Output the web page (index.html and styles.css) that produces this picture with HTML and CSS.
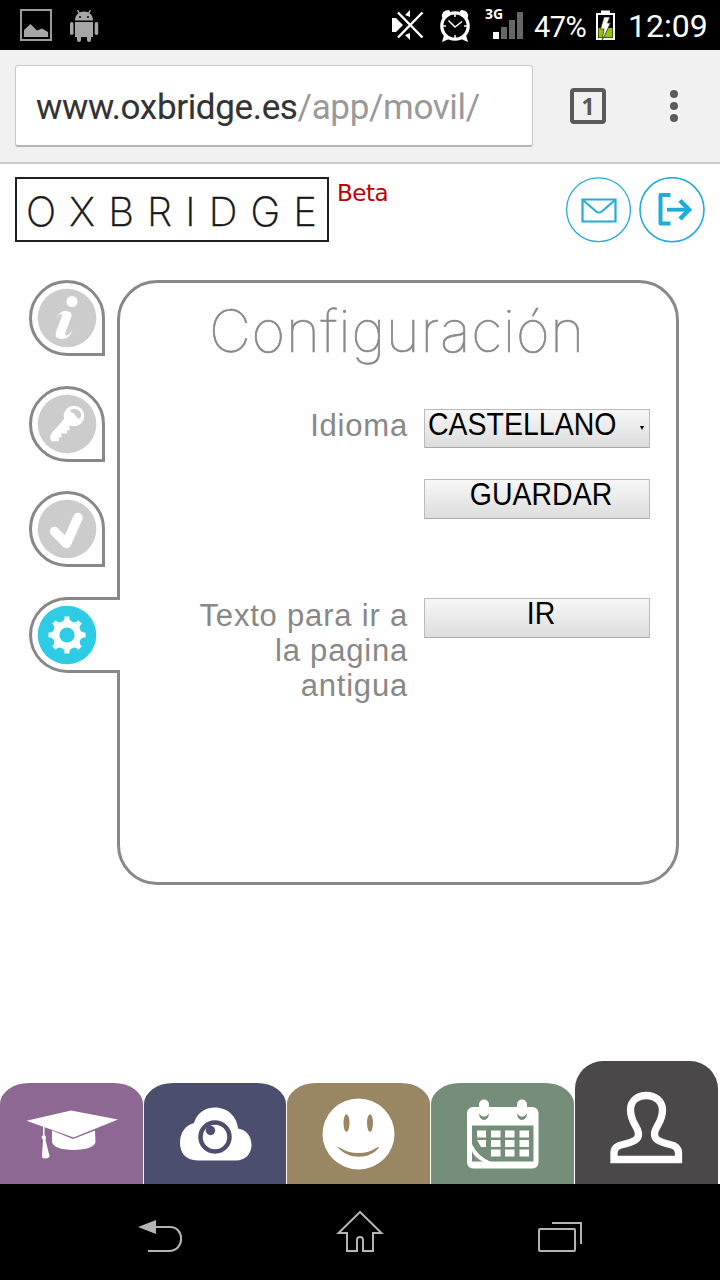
FILE: index.html
```html
<!DOCTYPE html>
<html lang="es">
<head>
<meta charset="utf-8">
<title>Oxbridge - Configuración</title>
<link rel="stylesheet" href="styles.css">
</head>
<body>
<div class="screen">
  <div class="status">
    <svg class="status-left" width="110" height="50" viewBox="0 0 110 50">
      <rect x="21" y="10" width="30" height="30" fill="none" stroke="#9b9b9b" stroke-width="2"/>
      <path d="M24 37V30L30.500 24L37 30.500L42 28.500L48 32V37Z" fill="#a6a6a6"/>
      <g fill="#a6a6a6">
        <path d="M75 20.500C75 8.500 93 8.500 93 20.500Z"/>
        <path d="M77.500 10L79.500 13.500M90.500 10L88.500 13.500" stroke="#a6a6a6" stroke-width="1.500"/>
        <path d="M75 22H93V37H75ZM77 36H81V40A2 2 0 0 1 77 40ZM87 36H91V40A2 2 0 0 1 87 40Z"/>
        <rect x="70" y="22" width="3.500" height="13" rx="1.750"/><rect x="94.700" y="22" width="3.500" height="13" rx="1.750"/>
      </g>
      <circle cx="80" cy="17" r="1" fill="#000"/><circle cx="88" cy="17" r="1" fill="#000"/>
    </svg>
    <div class="status-right">
      <svg width="34" height="50" viewBox="390 0 34 50">
        <path d="M392 18H396L403 25L396 32H392ZM405 15L410 10V17ZM405 35L410 40V33Z" fill="#fff"/>
        <path d="M398 12.500L422.500 37.500M422.500 12.500L398 37.500" stroke="#000" stroke-width="5"/>
        <path d="M398 12.500L422.500 37.500M422.500 12.500L398 37.500" stroke="#fff" stroke-width="2.500"/>
      </svg>
      <svg width="34" height="50" viewBox="438 0 34 50">
        <g fill="none" stroke="#fff"><circle cx="455" cy="26" r="13.200" stroke-width="3.200"/><path d="M448.500 20.500L455 27L462 21.500" stroke-width="1.500"/><path d="M455 14V17M455 35V38M443 26H446M464 26H467" stroke-width="1.500"/></g>
        <path d="M442 18Q441 10 449 10L451 13ZM468 18Q469 10 461 10L459 13ZM442 42L444 35L449 39ZM468 42L466 35L461 39Z" fill="#fff"/>
      </svg>
      <div class="signal">
        <span class="network">3G</span>
        <svg width="32" height="28" viewBox="0 0 32 28"><path d="M1 20H7V27H1Z" fill="#fff"/><path d="M9 15H15V27H9ZM17 8H23V27H17ZM25 0H31V27H25Z" fill="#666"/></svg>
      </div>
      <span class="percent">47%</span>
      <svg width="22" height="50" viewBox="595 0 22 50">
        <path d="M601 13V10.500H610V13" fill="#fff"/><path d="M597 14H614V39H597Z" fill="none" stroke="#fff" stroke-width="2"/>
        <path d="M598.500 28H612.500V37.500H598.500Z" fill="#91c300"/>
        <path d="M604 17H610L607.500 23H610.500L602 41L604 29H600.500Z" fill="#fff" stroke="#222" stroke-width=".7"/>
      </svg>
      <span class="clock">12:09</span>
    </div>
  </div>

  <div class="browser">
    <div class="url"><span class="host">www.oxbridge.es</span><span class="path">/app/movil/</span></div>
    <div class="tab-count">1</div>
    <div class="menu-dots"><i></i><i></i><i></i></div>
  </div>

  <main class="page">
    <header class="header">
      <div class="logo"><span>O</span><span>X</span><span>B</span><span>R</span><span>I</span><span>D</span><span>G</span><span>E</span></div>
      <span class="beta">Beta</span>
      <div class="actions">
        <svg width="66" height="66" viewBox="0 0 66 66" fill="none" stroke="#22acd8">
          <circle cx="33.500" cy="32.700" r="31.900" stroke-width="1.300"/>
          <path d="M17.500 22.500H50.500V44.500H17.500Z" stroke-width="2.200"/>
          <path d="M18.500 23.500L31.500 34.700Q34 36.500 36.500 34.700L49.500 23.500" stroke-width="2"/>
        </svg>
        <svg width="66" height="66" viewBox="0 0 66 66" fill="none" stroke="#1fabdc">
          <circle cx="33" cy="32.700" r="32" stroke-width="1.600"/>
          <path d="M31.500 18H21.500V46.500H31.500" stroke-width="4" stroke-linejoin="round"/>
          <path d="M28 32.700H49" stroke-width="3.800"/><path d="M41 23.500L50 32.700L41 42" stroke-width="4.500"/>
        </svg>
      </div>
    </header>

    <section class="workspace">
      <nav class="side">
        <a class="side-tab">
          <svg width="60" height="60" viewBox="0 0 60 60"><circle cx="30" cy="30" r="29.300" fill="#ccc"/>
            <circle cx="35" cy="13.500" r="5.600" fill="#fff"/>
            <path d="M18.500 32Q22 22.500 29 23Q36.500 23.500 34 30L28.500 44Q27.500 48 30 47.500Q33 46.500 35.500 41.500Q33.500 50.500 25.500 51Q17 51.500 19 44L24.500 29Q25.500 25.500 23.500 26Q21 27 18.500 32Z" fill="#fff"/></svg>
        </a>
        <a class="side-tab">
          <svg width="60" height="60" viewBox="0 0 60 60"><circle cx="30" cy="30" r="29.300" fill="#ccc"/>
            <circle cx="37" cy="22" r="10.300" fill="#fff"/>
            <path d="M27 25L14 40Q12 45 15 47.500L22 47V43.500L25 43L24 39.500H30V36L33 36.500L32 31.500L37 31Z" fill="#fff"/>
            <path d="M32.500 17Q38 12.500 43 17.500Q46 22 42 25Q39 23 37 19.500Q35 18 32.500 17Z" fill="#ccc"/></svg>
        </a>
        <a class="side-tab">
          <svg width="60" height="60" viewBox="0 0 60 60"><circle cx="30" cy="30" r="29.300" fill="#ccc"/>
            <path d="M17.500 32.500L29.500 44.500L41 18.500" fill="none" stroke="#fff" stroke-width="9.500" stroke-linecap="round" stroke-linejoin="round"/></svg>
        </a>
        <a class="side-tab side-tab-active">
          <svg width="60" height="60" viewBox="0 0 60 60"><circle cx="30" cy="30" r="29.300" fill="#2dcce4"/>
            <g fill="#fff"><circle cx="30" cy="30" r="14.300"/>
            <g id="tooth"><path d="M25.500 17L27.500 14V11.500H32.500V14L34.500 17ZM25.500 43L27.500 46V48.500H32.500V46L34.500 43Z"/></g>
            <use href="#tooth" transform="rotate(45 30 30)"/><use href="#tooth" transform="rotate(90 30 30)"/><use href="#tooth" transform="rotate(135 30 30)"/></g>
            <circle cx="30" cy="30" r="7.600" fill="#2dcce4"/></svg>
        </a>
      </nav>

      <div class="panel">
        <h1 class="title">Configuración</h1>
        <div class="form">
          <span class="label label-language">Idioma</span>
          <div class="control select"><span class="caption">CASTELLANO</span><i class="arrow"></i></div>
          <div class="control save"><span class="caption">GUARDAR</span></div>
          <span class="label label-old">Texto para ir a la pagina antigua</span>
          <div class="control go"><span class="caption">IR</span></div>
        </div>
      </div>
    </section>

    <nav class="bottom">
      <a class="section section-courses">
        <svg width="143" height="101" viewBox="0 0 143 101" fill="#fff">
          <path d="M26.500 37.700L71 27.500L118 36.500L73.500 54.500Z"/>
          <path d="M52 47.500L73 56L95 47.500L95.500 59Q94 66.500 73 67Q54 66.500 52 59Z"/>
          <path d="M43 44H44.500V52L46 54L45.500 57L49.500 73Q49 75.500 45 75.500Q42 75.500 42 73L43 57L41.500 54L43 52Z"/>
        </svg>
      </a>
      <a class="section section-view">
        <svg width="143" height="101" viewBox="0 0 143 101">
          <path d="M54 77.500C41 77.500 36 69 36 60C36 49 42 42 50 40C53 30 61 24.500 71 24.500C84 24.500 93 34 94 45.500C102 46.500 107.500 53 107.500 62C107.500 71 101 77.500 92 77.500Z" fill="#fff"/>
          <circle cx="71" cy="54" r="14.500" fill="#fff" stroke="#4b4e6d" stroke-width="4.500"/><circle cx="66.500" cy="47.500" r="4.700" fill="#4b4e6d"/>
        </svg>
      </a>
      <a class="section section-mood">
        <svg width="143" height="101" viewBox="0 0 143 101">
          <ellipse cx="71.500" cy="51" rx="36" ry="35.500" fill="#fff"/>
          <g fill="#998663"><ellipse cx="59.500" cy="40" rx="3" ry="8.700"/><ellipse cx="83" cy="40" rx="3" ry="8.700"/><path d="M50.500 64Q52 63.500 54.500 65.500C63 71.500 80 71.500 88 65.500Q91 63.500 92.500 64C83 77 61 77 50.500 64Z"/></g>
        </svg>
      </a>
      <a class="section section-calendar">
        <svg width="143" height="101" viewBox="0 0 143 101">
          <rect x="36" y="24" width="71.500" height="61.500" rx="6" fill="#fff"/>
          <rect x="48" y="16.500" width="10" height="18" rx="5" fill="#fff"/><rect x="86" y="16.500" width="10" height="18" rx="5" fill="#fff"/>
          <path d="M48 30.500Q53 37 58 30.500Q57.500 37 53 37Q48.500 37 48 30.500ZM86 30.500Q91 37 96 30.500Q95.500 37 91 37Q86.500 37 86 30.500Z" fill="#758e79"/>
          <rect x="41" y="42.500" width="61.500" height="36" fill="#758e79"/>
          <path d="M46 47.500H55V54.500H46ZM60 47.500H69.500V54.500H60ZM74 47.500H83.500V54.500H74ZM88.500 47.500H98V54.500H88.500ZM46 57H55V64H50ZM60 57H69.500V64H60ZM74 57H83.500V64H74ZM88.500 57H98V64H88.500ZM60 66.500H69.500V73.500H60ZM74 66.500H83.500V73.500H74ZM88.500 66.500H98V73.500H88.500Z" fill="#fff"/>
          <path d="M41 61Q46 73 61 79.500H54Q43 75 41 68Z" fill="#fff"/>
        </svg>
      </a>
      <a class="section section-profile">
        <svg width="143" height="124" viewBox="0 0 143 124" fill="none" stroke="#fff" stroke-width="7.300">
          <path d="M39 98.500H103.500V92C103.500 87 100 84.500 95 83.500C84 80.500 79 79 79.500 72C81 64 87.500 61 87.500 49C87.500 40 80 34.500 71.500 34.500C62 34.500 55.500 40 55.500 49C55.500 61 62 64 63.500 72C64 79 59 80.500 48 83.500C42 84.500 39 87 39 92Z"/>
        </svg>
      </a>
    </nav>
  </main>

  <div class="system-nav">
    <svg width="720" height="96" viewBox="0 1184 720 96" fill="none" stroke="#b4b4b4" stroke-width="2">
      <path d="M148 1251H169C185 1251 185 1227 170 1227H155"/>
      <path d="M138 1227L156 1220V1234Z" fill="#b4b4b4" stroke="none"/>
      <path d="M360 1212L338.500 1233H347V1251H357V1240Q357 1237 360 1237Q363 1237 363 1240V1251H373V1233H381.500Z"/>
      <rect x="539" y="1229" width="36" height="22" rx="1"/><path d="M552 1223H581V1244"/>
    </svg>
  </div>
</div>
</body>
</html>
```
FILE: styles.css
```css
* { box-sizing: border-box; }
body { margin: 0; background: #fefefe; font-family: "Liberation Sans", Arial, sans-serif; }
svg { display: block; flex: none; }
.screen { width: 720px; height: 1280px; display: flex; flex-direction: column; overflow: hidden; }

.status { height: 50px; background: #000; display: flex; justify-content: space-between; color: #fff; font-family: Roboto, sans-serif; }
.status-right { display: flex; height: 50px; padding-right: 12px; }
.status-right > svg:nth-child(2) { margin-left: 14px; }
.signal { width: 40px; margin: 7px 0 0 12px; height: 34px; display: grid; }
.signal > * { grid-area: 1 / 1; }
.signal svg { margin: 5px 0 0 8px; }
.network { font: bold 14px/14px "Open Sans", sans-serif; margin-left: 1px; }
.percent { font-size: 29px; line-height: 54px; width: 53px; margin-left: 10px; letter-spacing: -0.6px; white-space: nowrap; }
.status-right > svg:nth-of-type(3) { margin-left: 8px; }
.clock { font-size: 32px; line-height: 52px; margin-left: 11px; width: 80px; letter-spacing: 0; white-space: nowrap; }

.browser { height: 114px; background: #f1f1f1; display: flex; align-items: flex-start; padding: 15px 0 0 15px; border-bottom: 2px solid #cbcbcb; }
.url { width: 518px; height: 82px; background: #fff; border: 1px solid #c9c9c9; border-bottom: 2px solid #b5b5b5; border-radius: 3px; padding-left: 20px; font: 35px/84px Roboto, sans-serif; letter-spacing: -0.35px; white-space: nowrap; color: #333; }
.host { -webkit-text-stroke: 0.1px #333; }
.path { color: #999; }
.tab-count { width: 36px; height: 36px; margin: 23px 0 0 37px; border: 4px solid #5a5a5a; border-radius: 4px; font: bold 23px/29px "Open Sans", sans-serif; color: #5a5a5a; text-align: center; }
.menu-dots { display: flex; flex-direction: column; gap: 4px; margin: 25px 0 0 64px; }
.menu-dots i { width: 8px; height: 8px; border-radius: 50%; background: #5a5a5a; }

.page { flex: 1; display: flex; flex-direction: column; }
.header { display: flex; padding: 13px 15px 0; height: 116px; align-items: flex-start; }
.logo { width: 314px; height: 65px; border: 2px solid #202024; display: flex; justify-content: space-between; padding: 0 10px 0 9px; font: 200 40px/65px Inter, "Liberation Sans", sans-serif; color: #17171a; -webkit-text-stroke: 0.45px #17171a; }
.beta { font: 23px/33px "DejaVu Sans", sans-serif; color: #c00000; margin-left: 8px; letter-spacing: -0.5px; }
.actions { display: flex; gap: 8px; margin-left: auto; }

.workspace { display: flex; padding-left: 29px; height: 605px; }
.side { width: 88px; display: flex; flex-direction: column; gap: 29.7px; }
.side-tab { width: 76px; height: 76px; border: 3px solid #888; border-radius: 50% 50% 0 50%; padding: 5px; background: #fefefe; }
.side-tab-active { width: 91px; border-right: 0; border-radius: 38px 0 0 38px; z-index: 1; position: relative; }
.panel { width: 562px; height: 605px; border: 3px solid #888; border-radius: 40px; }
.title { margin: 10px 0 0; padding-left: 89px; height: 78px; font: 100 58px/76px Inter, "Liberation Sans", sans-serif; color: #888; letter-spacing: 0.7px; -webkit-text-stroke: 0.7px #888; white-space: nowrap; }

.form { display: grid; grid-template-columns: 288px 226px; grid-template-rows: 39px 40px 110px; gap: 31px 16px; padding-top: 38px; }
.label { text-align: right; font-size: 31px; line-height: 35px; letter-spacing: 0.8px; color: #888; }
.label-language { margin-top: -1px; }
.label-old { padding-left: 70px; margin-top: 48px; height: 106px; }
.control { height: 40px; border: 1px solid #bbb; border-bottom-color: #aaa; border-radius: 1px; background: linear-gradient(#f7f7f7, #ddd); color: #000; font-size: 32px; line-height: 28px; text-align: center; white-space: nowrap; }
.caption { display: inline-block; transform: scaleX(0.89); }
.select { height: 39px; display: flex; justify-content: space-between; padding: 0 5px 0 3px; }
.select .caption { transform-origin: left; }
.arrow { width: 0; height: 0; border: 2.5px solid transparent; border-top: 4px solid #000; border-bottom: 0; margin-top: 16px; }
.save { grid-column: 2; padding-left: 8px; }
.go { padding-left: 8px; margin-top: 48px; }

.bottom { margin-top: auto; display: flex; gap: 1.15px; align-items: flex-end; height: 124px; }
.section { width: 142.6px; height: 101px; border-radius: 29px 29px 0 0 / 21px 21px 0 0; }
.section-courses { background: #8c6892; }
.section-view { background: #4b4e6d; }
.section-mood { background: #998663; }
.section-calendar { background: #758e79; }
.section-profile { background: #4a4849; height: 123.5px; border-radius: 28px 28px 0 0; }
.system-nav { height: 96px; background: #000; }
```
